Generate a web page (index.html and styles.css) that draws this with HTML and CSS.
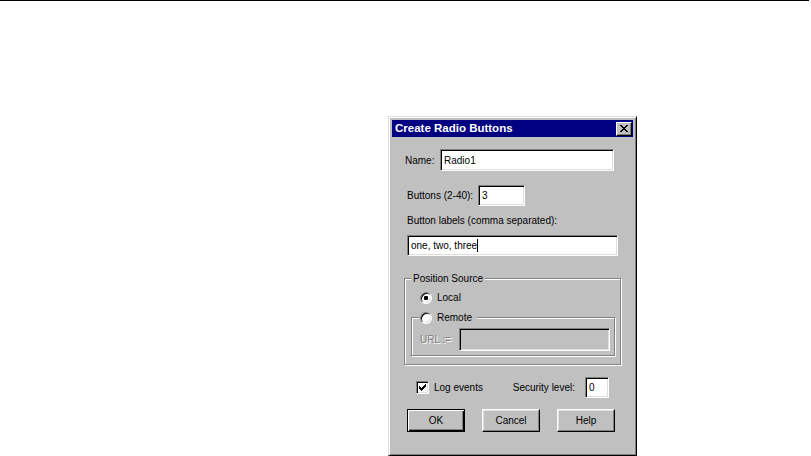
FILE: index.html
```html
<!DOCTYPE html>
<html>
<head>
  <title>Create Radio Buttons</title>
  <link rel="stylesheet" href="styles.css">
</head>
<body>
  <div class="rule"></div>
  <div class="dialog">
    <div class="titlebar">
      <span class="title">Create Radio Buttons</span>
      <span class="close">
        <svg width="8" height="7" viewBox="0 0 8 7" shape-rendering="crispEdges">
          <path d="M0 0h2v1h-2zM6 0h2v1h-2zM1 1h2v1h-2zM5 1h2v1h-2zM2 2h4v1h-4zM3 3h2v1h-2zM2 4h4v1h-4zM1 5h2v1h-2zM5 5h2v1h-2zM0 6h2v1h-2zM6 6h2v1h-2z" fill="#000"/>
        </svg>
      </span>
    </div>

    <div class="row name-row">
      <span class="label">Name:</span>
      <div class="edit name-edit">Radio1</div>
    </div>

    <div class="row count-row">
      <span class="label">Buttons (2-40):</span>
      <div class="edit count-edit">3</div>
    </div>

    <div class="caption">Button labels (comma separated):</div>
    <div class="edit labels-edit">one, two, three<span class="caret"></span></div>

    <div class="group">
      <span class="legend">Position Source</span>
      <div class="radio-row local-row">
        <span class="radio checked"><span class="dot"></span></span>
        <span>Local</span>
      </div>
      <div class="subgroup">
        <div class="radio-row legend remote-row">
          <span class="radio"></span>
          <span>Remote</span>
        </div>
        <div class="row url-row">
          <span class="label disabled">URL :=</span>
          <div class="edit url-edit"></div>
        </div>
      </div>
    </div>

    <div class="row options-row">
      <span class="check">
        <svg width="7" height="7" viewBox="0 0 7 7" shape-rendering="crispEdges">
          <path d="M6 0h1v1h-1zM5 1h2v1h-2zM0 2h1v1h-1zM4 2h3v1h-3zM0 3h2v1h-2zM3 3h3v1h-3zM0 4h5v1h-5zM1 5h3v1h-3zM2 6h1v1h-1z" fill="#000"/>
        </svg>
      </span>
      <span class="check-label">Log events</span>
      <div class="security">
        <span class="label">Security level:</span>
        <div class="edit level-edit">0</div>
      </div>
    </div>

    <div class="row buttons-row">
      <button class="btn default">OK</button>
      <button class="btn">Cancel</button>
      <button class="btn">Help</button>
    </div>
  </div>
</body>
</html>
```

FILE: styles.css
```css
body {
  margin: 0;
  background: #FFFFFF;
  font-family: "Liberation Sans", Arial, sans-serif;
}
.rule {
  width: 809px;
  height: 1px;
  background: #000000;
}
.dialog {
  margin: 115px 0 0 388px;
  width: 249px;
  height: 340px;
  box-sizing: border-box;
  padding: 3px;
  background: #C0C0C0;
  border: 1px solid;
  border-color: #DFDFDF #000000 #000000 #DFDFDF;
  box-shadow: inset 1px 1px 0 #FFFFFF, inset -1px -1px 0 #808080;
  display: flex;
  flex-direction: column;
  font-size: 10px;
  line-height: 13px;
  color: #000000;
}
.titlebar {
  height: 17px;
  flex: none;
  background: #000080;
  color: #FFFFFF;
  display: flex;
  align-items: center;
  justify-content: space-between;
  padding: 0 1px 0 3px;
}
.title {
  font-weight: bold;
  font-size: 11.5px;
}
.close {
  width: 16px;
  height: 14px;
  box-sizing: border-box;
  background: #C0C0C0;
  border: 1px solid;
  border-color: #FFFFFF #000000 #000000 #FFFFFF;
  box-shadow: inset -1px -1px 0 #808080;
  display: flex;
  align-items: center;
  justify-content: center;
}
.row {
  display: flex;
  align-items: center;
  flex: none;
}
.edit {
  box-sizing: border-box;
  height: 21px;
  padding: 0 3px;
  background: #FFFFFF;
  border: 1px solid;
  border-color: #808080 #FFFFFF #FFFFFF #808080;
  box-shadow: inset 1px 1px 0 #000000, inset -1px -1px 0 #DFDFDF;
  display: flex;
  align-items: center;
  flex: none;
}
.name-row {
  margin: 12px 0 0 13px;
}
.name-row .label {
  width: 35px;
}
.name-edit {
  width: 174px;
  height: 22px;
}
.count-row {
  margin: 14px 0 0 15px;
}
.count-row .label {
  width: 71px;
}
.count-edit {
  width: 47px;
}
.caption {
  margin: 8px 0 0 15px;
}
.labels-edit {
  margin: 8px 0 0 15px;
  width: 211px;
}
.caret {
  width: 1px;
  height: 13px;
  background: #000000;
}
.group {
  position: relative;
  flex: none;
  margin: 22px 0 0 12px;
  width: 217px;
  height: 87px;
  box-sizing: border-box;
  border: 1px solid #808080;
  box-shadow: inset 1px 1px 0 #FFFFFF, 1px 1px 0 #FFFFFF;
}
.legend {
  position: absolute;
  top: -7px;
  left: 6px;
  padding: 0 2px;
  background: #C0C0C0;
}
.radio-row {
  display: flex;
  align-items: center;
  gap: 5px;
  height: 13px;
}
.local-row {
  margin: 12px 0 0 15px;
}
.radio {
  width: 12px;
  height: 12px;
  box-sizing: border-box;
  border-radius: 50%;
  background: #FFFFFF;
  border: 1px solid;
  border-color: #808080 #FFFFFF #FFFFFF #808080;
  box-shadow: inset 1px 1px 0 #000000, inset -1px -1px 0 #DFDFDF;
  display: flex;
  align-items: center;
  justify-content: center;
}
.dot {
  width: 4px;
  height: 4px;
  border-radius: 1px;
  background: #000000;
}
.subgroup {
  position: relative;
  margin: 13px 0 0 6px;
  width: 204px;
  height: 39px;
  box-sizing: border-box;
  border: 1px solid #808080;
  box-shadow: inset 1px 1px 0 #FFFFFF, 1px 1px 0 #FFFFFF;
}
.remote-row {
  left: 7px;
  padding: 0 5px 0 1px;
}
.url-row {
  margin: 10px 0 0 8px;
}
.url-row .label {
  width: 39px;
}
.disabled {
  color: #808080;
  text-shadow: 1px 1px 0 #FFFFFF;
}
.url-edit {
  width: 151px;
  height: 23px;
  background: #C0C0C0;
}
.options-row {
  margin: 12px 0 0 24px;
  height: 21px;
}
.check {
  width: 13px;
  height: 13px;
  box-sizing: border-box;
  background: #FFFFFF;
  border: 1px solid;
  border-color: #808080 #FFFFFF #FFFFFF #808080;
  box-shadow: inset 1px 1px 0 #000000, inset -1px -1px 0 #DFDFDF;
  display: flex;
  align-items: center;
  justify-content: center;
}
.check-label {
  margin-left: 5px;
}
.security {
  margin: 0 24px 0 auto;
  display: flex;
  align-items: center;
  gap: 10px;
}
.level-edit {
  width: 24px;
}
.buttons-row {
  margin: 11px 0 0 15px;
  gap: 17px;
}
.btn {
  width: 58px;
  height: 23px;
  box-sizing: border-box;
  padding: 0;
  margin: 0;
  font: inherit;
  color: #000000;
  background: #C0C0C0;
  border: 1px solid;
  border-color: #FFFFFF #000000 #000000 #FFFFFF;
  box-shadow: inset -1px -1px 0 #808080, inset 1px 1px 0 #DFDFDF;
}
.btn.default {
  border-color: #000000;
  box-shadow: inset 1px 1px 0 #FFFFFF, inset -1px -1px 0 #000000, inset -2px -2px 0 #808080;
}
```
